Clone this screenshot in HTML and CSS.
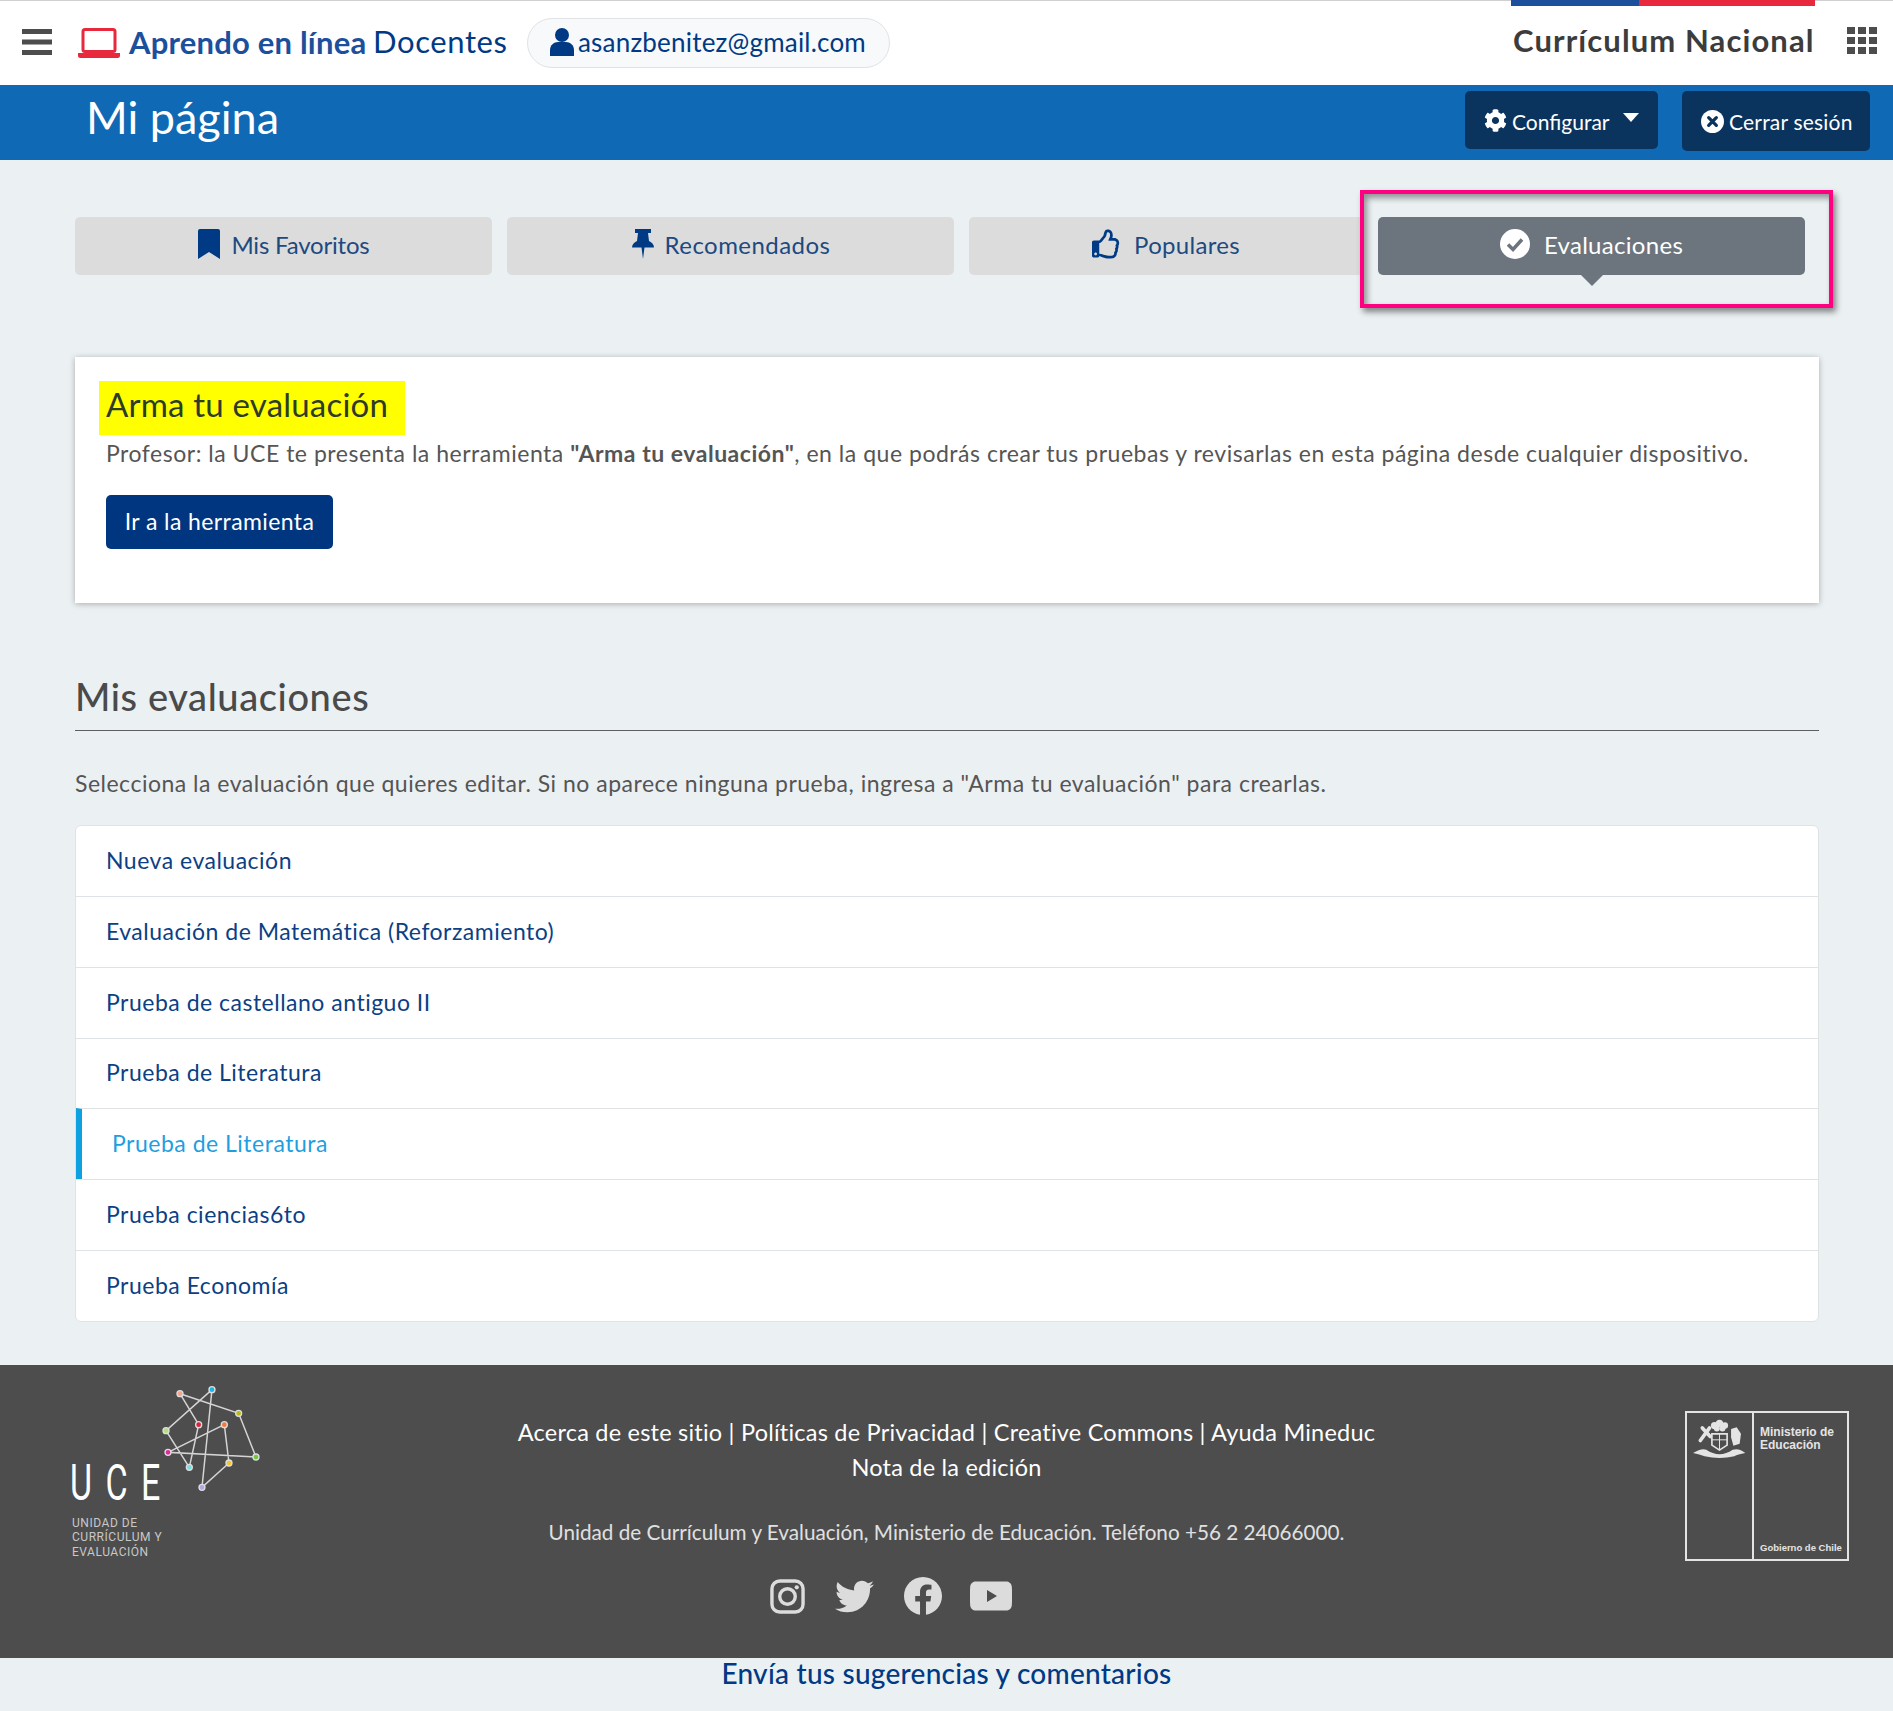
FILE: index.html
```html
<!DOCTYPE html>
<html lang="es">
<head>
<meta charset="utf-8">
<title>Mi página</title>
<link rel="stylesheet" href="styles.css">
</head>
<body>
<header class="topbar">
  <div class="brand">
    <svg class="burger" viewBox="0 0 30 26"><path d="M0 0h30v5H0zM0 10.500h30v5H0zM0 21h30v5H0z"/></svg>
    <svg class="laptop" viewBox="0 0 42 30"><rect x="5" y="1.500" width="32" height="22" rx="2" fill="none" stroke="#e8283c" stroke-width="3"/><path d="M0 25h42v2.500a2.500 2.500 0 0 1-2.500 2.500h-37a2.500 2.500 0 0 1-2.500-2.500z" fill="#e8283c"/></svg>
    <span class="brand-a">Aprendo en línea</span>
    <span class="brand-b">Docentes</span>
    <span class="pill">
      <svg class="user" viewBox="0 0 24 28"><circle cx="12" cy="7" r="7"/><path d="M0 28v-6c0-5 4-8 8-8h8c4 0 8 3 8 8v6z"/></svg>
      asanzbenitez@gmail.com
    </span>
  </div>
  <div class="cn">
    <div class="stripe"><i class="s-blue"></i><i class="s-red"></i></div>
    <span class="cn-title">Currículum Nacional</span>
    <svg class="grid" viewBox="0 0 30 27"><path d="M0 0h8v7H0zM11 0h8v7h-8zM22 0h8v7h-8zM0 10h8v7H0zM11 10h8v7h-8zM22 10h8v7h-8zM0 20h8v7H0zM11 20h8v7h-8zM22 20h8v7h-8z"/></svg>
  </div>
</header>

<div class="bluebar">
  <h1>Mi página</h1>
  <div class="bar-btns">
    <a class="dark-btn cfg">
      <svg class="ic" viewBox="0 0 512 512"><path fill="#fff" d="M487.4 315.700l-42.600-24.600c4.300-23.200 4.300-47 0-70.200l42.600-24.600c4.900-2.800 7.100-8.600 5.500-14-11.100-35.600-30-67.800-54.700-94.600-3.800-4.100-10-5.100-14.800-2.300L380.800 110c-17.900-15.400-38.500-27.300-60.800-35.100V25.800c0-5.600-3.900-10.500-9.400-11.700-36.700-8.200-74.300-7.800-109.200 0-5.500 1.200-9.400 6.100-9.400 11.700V75c-22.200 7.900-42.800 19.800-60.800 35.100L88.700 85.500c-4.900-2.800-11-1.900-14.800 2.300-24.700 26.700-43.600 58.900-54.700 94.600-1.700 5.400.6 11.200 5.500 14L67.300 221c-4.300 23.200-4.300 47 0 70.200l-42.600 24.600c-4.900 2.800-7.100 8.600-5.500 14 11.100 35.600 30 67.800 54.700 94.600 3.800 4.100 10 5.100 14.800 2.300l42.600-24.600c17.900 15.400 38.500 27.300 60.800 35.100v49.200c0 5.600 3.900 10.500 9.400 11.700 36.700 8.200 74.300 7.800 109.200 0 5.500-1.200 9.400-6.100 9.400-11.700v-49.200c22.200-7.900 42.800-19.800 60.800-35.100l42.600 24.600c4.900 2.800 11 1.900 14.800-2.300 24.700-26.700 43.600-58.900 54.700-94.600 1.500-5.500-.7-11.300-5.600-14.100zM256 336c-44.100 0-80-35.900-80-80s35.900-80 80-80 80 35.900 80 80-35.900 80-80 80z"/></svg>
      <span class="cfg-label">Configurar</span>
      <i class="caret"></i>
    </a>
    <a class="dark-btn out">
      <svg class="ic" viewBox="0 0 24 24"><circle cx="12" cy="12" r="12" fill="#fff"/><path d="M8 8l8 8M16 8l-8 8" stroke="#0a335e" stroke-width="3.400" stroke-linecap="round"/></svg>
      <span class="out-label">Cerrar sesión</span>
    </a>
  </div>
</div>

<main class="content">
  <nav class="tabs">
    <a class="tab t1">
      <svg class="tab-ic bm" viewBox="0 0 22 30"><path d="M0 2a2 2 0 0 1 2-2h18a2 2 0 0 1 2 2v28l-11-7-11 7z"/></svg>
      <span>Mis Favoritos</span>
    </a>
    <a class="tab t2">
      <svg class="tab-ic pin" viewBox="0 0 22 30"><path d="M3 0h16v4h-3l1 8c3 1.500 5 3.500 5 6.500H12.500L11 30l-1.500-11.500H0C0 15.500 2 13.500 5 12l1-8H3z"/></svg>
      <span>Recomendados</span>
    </a>
    <a class="tab t3">
      <svg class="tab-ic thumb" viewBox="0 0 512 512"><path d="M466.270 286.690C475.040 271.840 480 256 480 236.850c0-44.015-37.218-85.580-85.820-85.580H357.700c4.920-12.810 8.850-28.130 8.850-46.540C366.550 31.936 328.860 0 271.280 0c-61.607 0-58.093 94.933-71.760 108.600-22.747 22.747-49.615 66.447-68.760 83.400H32c-17.673 0-32 14.327-32 32v240c0 17.673 14.327 32 32 32h64c14.893 0 27.408-10.174 30.978-23.950 44.509 1.001 75.060 39.940 177.802 39.940 7.220 0 15.220.01 22.220.01 77.117 0 111.986-39.423 112.940-95.330 13.319-18.425 20.299-43.122 17.340-66.990 9.854-18.452 13.664-40.343 8.990-62.990zm-61.750 53.830c12.560 21.130 1.260 49.410-13.940 57.570 7.700 48.780-17.608 65.900-53.120 65.900h-37.820c-71.639 0-118.029-37.820-171.640-37.820V240h10.920c28.360 0 67.980-70.890 94.540-97.460 28.360-28.360 18.910-75.630 37.820-94.540 47.270 0 47.270 32.980 47.270 56.730 0 39.170-28.360 56.720-28.360 94.540h103.990c21.110 0 37.730 18.910 37.820 37.820.09 18.900-12.820 37.810-21.280 37.810 12.070 13.022 14.660 40.390-5.400 59.250zM88 432c0 13.255-10.745 24-24 24s-24-10.745-24-24 10.745-24 24-24 24 10.745 24 24z"/></svg>
      <span>Populares</span>
    </a>
    <div class="tab-focus">
      <a class="tab active">
        <svg class="tab-ic check" viewBox="0 0 30 30"><circle cx="15" cy="15" r="15" fill="#fff"/><path d="M8 15.500l5 5 9-10" fill="none" stroke="#6c757d" stroke-width="3.500"/></svg>
        <span>Evaluaciones</span>
      </a>
    </div>
  </nav>

  <section class="card">
    <h2 class="hl">Arma tu evaluación</h2>
    <p class="lead">Profesor: la UCE te presenta la herramienta <b>"Arma tu evaluación"</b>, en la que podrás crear tus pruebas y revisarlas en esta página desde cualquier dispositivo.</p>
    <a class="go">Ir a la herramienta</a>
  </section>

  <h2 class="sec">Mis evaluaciones</h2>
  <p class="sec-p">Selecciona la evaluación que quieres editar. Si no aparece ninguna prueba, ingresa a "Arma tu evaluación" para crearlas.</p>

  <ul class="list">
    <li>Nueva evaluación</li>
    <li>Evaluación de Matemática (Reforzamiento)</li>
    <li>Prueba de castellano antiguo II</li>
    <li>Prueba de Literatura</li>
    <li class="on">Prueba de Literatura</li>
    <li>Prueba ciencias6to</li>
    <li>Prueba Economía</li>
  </ul>
</main>

<footer class="foot">
  <div class="uce">
    <svg class="net" viewBox="360 40 310 330">
      <path fill="none" stroke="#d4d4d4" stroke-width="4.500" d="M420 72L596 131L648 262L384 248L553 165L567 280L486 353L516 60L378 183L448 293L476 165L420 72"/>
      <g stroke="#dedede" stroke-width="4">
        <circle cx="420" cy="72" r="9" fill="#f4a58a"/><circle cx="516" cy="60" r="9" fill="#1cb4e8"/>
        <circle cx="596" cy="131" r="9" fill="#b8bc10"/><circle cx="476" cy="165" r="9" fill="#e0203c"/>
        <circle cx="553" cy="165" r="9" fill="#f2783c"/><circle cx="378" cy="183" r="9" fill="#b4e07c"/>
        <circle cx="384" cy="248" r="9" fill="#e0289c"/><circle cx="648" cy="262" r="9" fill="#70c83c"/>
        <circle cx="567" cy="280" r="9" fill="#f4c820"/><circle cx="448" cy="293" r="9" fill="#78e0dc"/>
        <circle cx="486" cy="353" r="9" fill="#b4a4e8"/>
      </g>
    </svg>
    <div class="uce-big">UCE</div>
    <div class="uce-small">UNIDAD DE<br>CURRÍCULUM Y<br>EVALUACIÓN</div>
  </div>
  <div class="foot-mid">
    <p class="f-links">Acerca de este sitio | Políticas de Privacidad | Creative Commons | Ayuda Mineduc</p>
    <p class="f-links">Nota de la edición</p>
    <p class="f-addr">Unidad de Currículum y Evaluación, Ministerio de Educación. Teléfono +56 2 24066000.</p>
    <div class="social">
      <svg class="s-ig" viewBox="0 0 36 36"><rect x="2" y="2" width="32" height="32" rx="8" fill="none" stroke="#dcdcdc" stroke-width="3.500"/><circle cx="18" cy="18" r="8" fill="none" stroke="#dcdcdc" stroke-width="3.500"/><circle cx="27.500" cy="8.500" r="2.200" fill="#dcdcdc"/></svg>
      <svg class="s-tw" viewBox="0 0 512 512"><path fill="#dcdcdc" d="M459.370 151.716c.325 4.548.325 9.097.325 13.645 0 138.720-105.583 298.558-298.558 298.558-59.452 0-114.680-17.219-161.137-47.106 8.447.974 16.568 1.299 25.340 1.299 49.055 0 94.213-16.568 130.274-44.832-46.132-.975-84.792-31.188-98.112-72.772 6.498.974 12.995 1.624 19.818 1.624 9.421 0 18.843-1.300 27.614-3.573-48.081-9.747-84.143-51.980-84.143-102.985v-1.299c13.969 7.797 30.214 12.670 47.431 13.319-28.264-18.843-46.781-51.005-46.781-87.391 0-19.492 5.197-37.360 14.294-52.954 51.655 63.675 129.300 105.258 216.365 109.807-1.624-7.797-2.599-15.918-2.599-24.040 0-57.828 46.782-104.934 104.934-104.934 30.213 0 57.502 12.670 76.670 33.137 23.715-4.548 46.456-13.320 66.599-25.340-7.798 24.366-24.366 44.833-46.132 57.827 21.117-2.273 41.584-8.122 60.426-16.243-14.292 20.791-32.161 39.308-52.628 54.253z"/></svg>
      <svg class="s-fb" viewBox="8 8 496 496"><path fill="#dcdcdc" d="M504 256C504 119 393 8 256 8S8 119 8 256c0 123.780 90.690 226.380 209.250 245V327.690h-63V256h63v-54.640c0-62.150 37-96.480 93.670-96.480 27.140 0 55.520 4.840 55.520 4.840v61h-31.280c-30.800 0-40.410 19.120-40.410 38.730V256h68.780l-11 71.690h-57.780V501C413.310 482.380 504 379.780 504 256z"/></svg>
      <svg class="s-yt" viewBox="0 0 42 30"><path fill="#dcdcdc" fill-rule="evenodd" d="M6 0.500h30c3 0 5.500 2 5.800 5 .4 6 .4 13 0 19-.3 3-2.800 5-5.800 5H6c-3 0-5.500-2-5.800-5-.4-6-.4-13 0-19 .3-3 2.800-5 5.800-5zM17 9v12l10-6z"/></svg>
    </div>
  </div>
  <div class="min-logo">
    <div class="min-l">
      <svg class="arms" viewBox="100 85 160 118">
        <g fill="#e4e4e4">
          <circle cx="165" cy="105" r="11"/><circle cx="180" cy="98" r="11"/><circle cx="196" cy="105" r="10"/><circle cx="172" cy="114" r="9"/><circle cx="189" cy="114" r="9"/>
          <path d="M215 115l17-5 13 20-4 30-19 6-7-26z"/>
          <path d="M100 188q25-16 40-10 40 27 80 0 20-6 38 10-23 4-33 10-45 10-90 0-15-6-35-10z"/>
        </g>
        <g fill="none" stroke="#e4e4e4" stroke-linecap="round">
          <path d="M150 112l-28 38M128 112l24 26" stroke-width="11"/>
          <path d="M157 130h46v34l-23 15-23-15z" stroke-width="5"/>
          <path d="M157 148h46M180 132v44" stroke-width="3"/>
        </g>
      </svg>
    </div>
    <div class="min-r">
      <span class="min-t">Ministerio de Educación</span>
      <span class="min-g">Gobierno de Chile</span>
    </div>
  </div>
</footer>
<div class="suggest"><a>Envía tus sugerencias y comentarios</a></div>
</body>
</html>
```

FILE: styles.css
```css
* { box-sizing: border-box; }
html, body { margin: 0; padding: 0; }
body {
  height: 1711px;
  overflow: hidden;
  background: #ebf0f3;
  font-family: "Lato", "Open Sans", sans-serif;
  color: #555;
  font-size: 22px;
}
p, h1, h2, ul { margin: 0; padding: 0; }

/* header */
.topbar {
  height: 85px;
  background: #fff;
  border-top: 1px solid #d0d0d0;
  display: flex;
  justify-content: space-between;
  padding: 0 16px 0 22px;
}
.brand { display: flex; align-items: center; }
.burger { width: 30px; height: 26px; fill: #4d4d4d; margin-right: 26px; margin-top: -3px; }
.laptop { width: 42px; height: 30px; margin-right: 9px; }
.brand-a { font-size: 31px; font-weight: 700; color: #1c4f9c; width: 244px; white-space: nowrap; letter-spacing: .2px; margin-top: -2px; }
.brand-b { font-size: 31px; color: #003a84; width: 132px; white-space: nowrap; margin-top: -5px; letter-spacing: .6px; }
.pill {
  height: 50px; width: 363px;
  margin-left: 22px; margin-top: -1px;
  border: 1px solid #dfe3e6; border-radius: 25px;
  background: #f7f9fa;
  display: flex; align-items: center; gap: 4px;
  padding: 0 0 2px 22px;
  font-size: 26px; color: #003a84; white-space: nowrap; letter-spacing: .2px;
}
.user { width: 24px; height: 28px; fill: #003a84; }
.cn { display: flex; align-items: center; position: relative; gap: 32px; margin-top: -1px; }
.stripe { position: absolute; left: -2px; top: 0; width: 304px; height: 6px; display: flex; }
.s-blue { width: 128px; background: #1c4f9c; }
.s-red { flex: 1; background: #e8283c; }
.cn-title { font-size: 31px; font-weight: 700; color: #3c3c3c; width: 302px; white-space: nowrap; letter-spacing: 1.1px; margin-top: -5px; }
.grid { width: 30px; height: 27px; fill: #4d4d4d; margin-top: -5px; }

/* blue bar */
.bluebar {
  height: 75px;
  background: #0f69b4;
  display: flex; justify-content: space-between;
  padding: 5px 23px 0 86px;
}
h1 { font-size: 45px; font-weight: 400; color: #fff; line-height: 54px; }
.bar-btns { display: flex; gap: 24px; align-items: flex-start; margin-top: 1px; }
.dark-btn {
  background: #0a335e; color: #fff; border-radius: 5px;
  display: flex; align-items: center; font-size: 21px;
  height: 58px;
}
.cfg { width: 193px; padding-left: 19px; gap: 5px; }
.out { width: 188px; height: 60px; padding-left: 19px; gap: 5px; }
.ic { width: 23px; height: 23px; flex: none; }
.cfg-label { margin-top: 2px; }
.out-label { letter-spacing: .2px; }
.caret { width: 0; height: 0; border: 8px solid transparent; border-top: 9px solid #fff; border-bottom: 0; margin: -5px 0 0 9px; }

/* tabs */
.content { padding: 57px 74px 0 75px; }
.tabs { display: flex; gap: 15px; position: relative; height: 58px; }
.tab {
  height: 58px;
  background: #dcdcdc;
  border-radius: 5px;
  display: flex; align-items: center; justify-content: center; gap: 10px;
  font-size: 24px; color: #1c4a80; letter-spacing: .3px;
  flex: none;
}
.tab span { margin-top: -3px; }
.t1 { width: 417px; letter-spacing: -.2px; }
.t2 { width: 447px; letter-spacing: .45px; }
.t3 { width: 394px; }
.tab-ic { fill: #003a84; margin-top: -5px; }
.bm { width: 24px; height: 30px; }
.pin { width: 24px; height: 30px; }
.thumb { width: 29px; height: 30px; margin-right: 3px; }
.check { width: 30px; height: 30px; margin-right: 4px; margin-top: -4px; }
.tab-focus {
  position: absolute;
  left: 1285px; top: -27px;
  width: 473px; height: 118px;
  border: 4px solid #ff0080;
  background: #ebf0f3;
  box-shadow: 3px 4px 6px rgba(0,0,0,.45), inset 3px 4px 6px rgba(0,0,0,.4);
  padding: 23px 0 0 14px;
}
.active { width: 427px; background: #6c757d; color: #fff; position: relative; }
.active::after {
  content: ""; position: absolute; left: 50%; bottom: -11px; margin-left: -11px;
  border: 11px solid transparent; border-top: 11px solid #6c757d; border-bottom: 0;
}

/* card */
.card {
  margin-top: 82px;
  height: 246px;
  background: #fff;
  box-shadow: 0 1px 6px rgba(0,0,0,.28);
  padding: 24px 31px;
}
.hl {
  display: inline-block;
  margin-left: -7px;
  background: #ff0;
  width: 306px; height: 54px;
  padding-left: 7px;
  font-size: 33px; font-weight: 400; line-height: 46px; color: #2d3b2a; letter-spacing: .2px;
  white-space: nowrap;
}
.lead { font-size: 23px; line-height: 36px; white-space: nowrap; letter-spacing: .52px; }
.go {
  display: flex; align-items: center; justify-content: center;
  width: 227px; height: 54px; margin-top: 24px; padding-bottom: 2px;
  background: #00367f; color: #fff; border-radius: 5px;
  font-size: 23px; letter-spacing: .4px;
}

/* section */
.sec {
  margin-top: 70px;
  height: 58px;
  border-bottom: 1px solid #5f5f5f;
  font-size: 38px; font-weight: 500; line-height: 46px; color: #4a4a4a; letter-spacing: .6px;
}
.sec-p { margin-top: 34px; font-size: 23px; line-height: 36px; white-space: nowrap; letter-spacing: .5px; }

.list {
  list-style: none;
  margin-top: 24px;
  background: #fff;
  border: 1px solid #dfe3e6;
  border-radius: 6px;
  overflow: hidden;
}
.list li {
  height: 70.800px;
  display: flex; align-items: center;
  padding: 0 0 2px 30px;
  font-size: 23px;
  letter-spacing: .5px;
  color: #0c3f84;
  border-top: 1px solid #dfe3e6;
}
.list li:first-child { border-top: 0; height: 70px; }
.list li.on { color: #1f9fe0; border-left: 6px solid #0ea1e0; }

/* footer */
.foot {
  margin-top: 43px;
  height: 293px;
  background: #4d4d4d;
  display: grid;
  grid-template-columns: 300px 1fr 300px;
  position: relative;
}
.uce { position: relative; padding: 93px 0 0 72px; }
.net { position: absolute; left: 160px; top: 18px; width: 103.300px; height: 110px; }
.uce-big {
  font-family: Roboto, sans-serif;
  font-size: 50px; line-height: 50px; color: #fff; letter-spacing: 19.700px; font-weight: 400;
  transform: scaleX(.68); transform-origin: left center;
  margin-left: -2px;
  white-space: nowrap;
}
.uce-small {
  font-family: Roboto, sans-serif;
  font-size: 12px; line-height: 14.500px; color: #c8c8c8; letter-spacing: .54px; margin-top: 8px;
  white-space: nowrap;
}
.foot-mid { text-align: center; padding-top: 48px; color: #fff; }
.f-links { font-size: 23.500px; line-height: 38px; white-space: nowrap; letter-spacing: .22px; }
.foot-mid .f-links:nth-child(2) { margin-top: -3px; }
.f-addr { font-size: 20.700px; line-height: 30px; color: #e0e0e0; margin-top: 31px; white-space: nowrap; }
.social { display: flex; justify-content: center; align-items: center; gap: 30px; margin: 30px 112px 0 0; }
.s-ig { width: 35px; height: 35px; }
.s-tw { width: 39px; height: 39px; }
.s-fb { width: 38px; height: 38px; }
.s-yt { width: 42px; height: 30px; margin-left: -2px; }

.min-logo {
  position: absolute; right: 44px; top: 46px;
  width: 164px; height: 150px;
  border: 2.500px solid #e4e4e4;
  display: flex;
}
.min-l { width: 67px; border-right: 2.500px solid #e4e4e4; padding: 6px 0 0 6px; }
.arms { width: 53px; height: 39px; display: block; }
.min-r { flex: 1; display: flex; flex-direction: column; justify-content: space-between; padding: 13px 0 6px 6px; color: #e4e4e4; font-weight: 700; font-family: "Liberation Sans", sans-serif; }
.min-t { font-size: 12px; line-height: 13px; }
.min-g { font-size: 9.500px; line-height: 11px; white-space: nowrap; }

.suggest { text-align: center; line-height: 30px; }
.suggest a { font-size: 28px; font-weight: 500; color: #003a84; line-height: 30px; letter-spacing: .25px; }
```
